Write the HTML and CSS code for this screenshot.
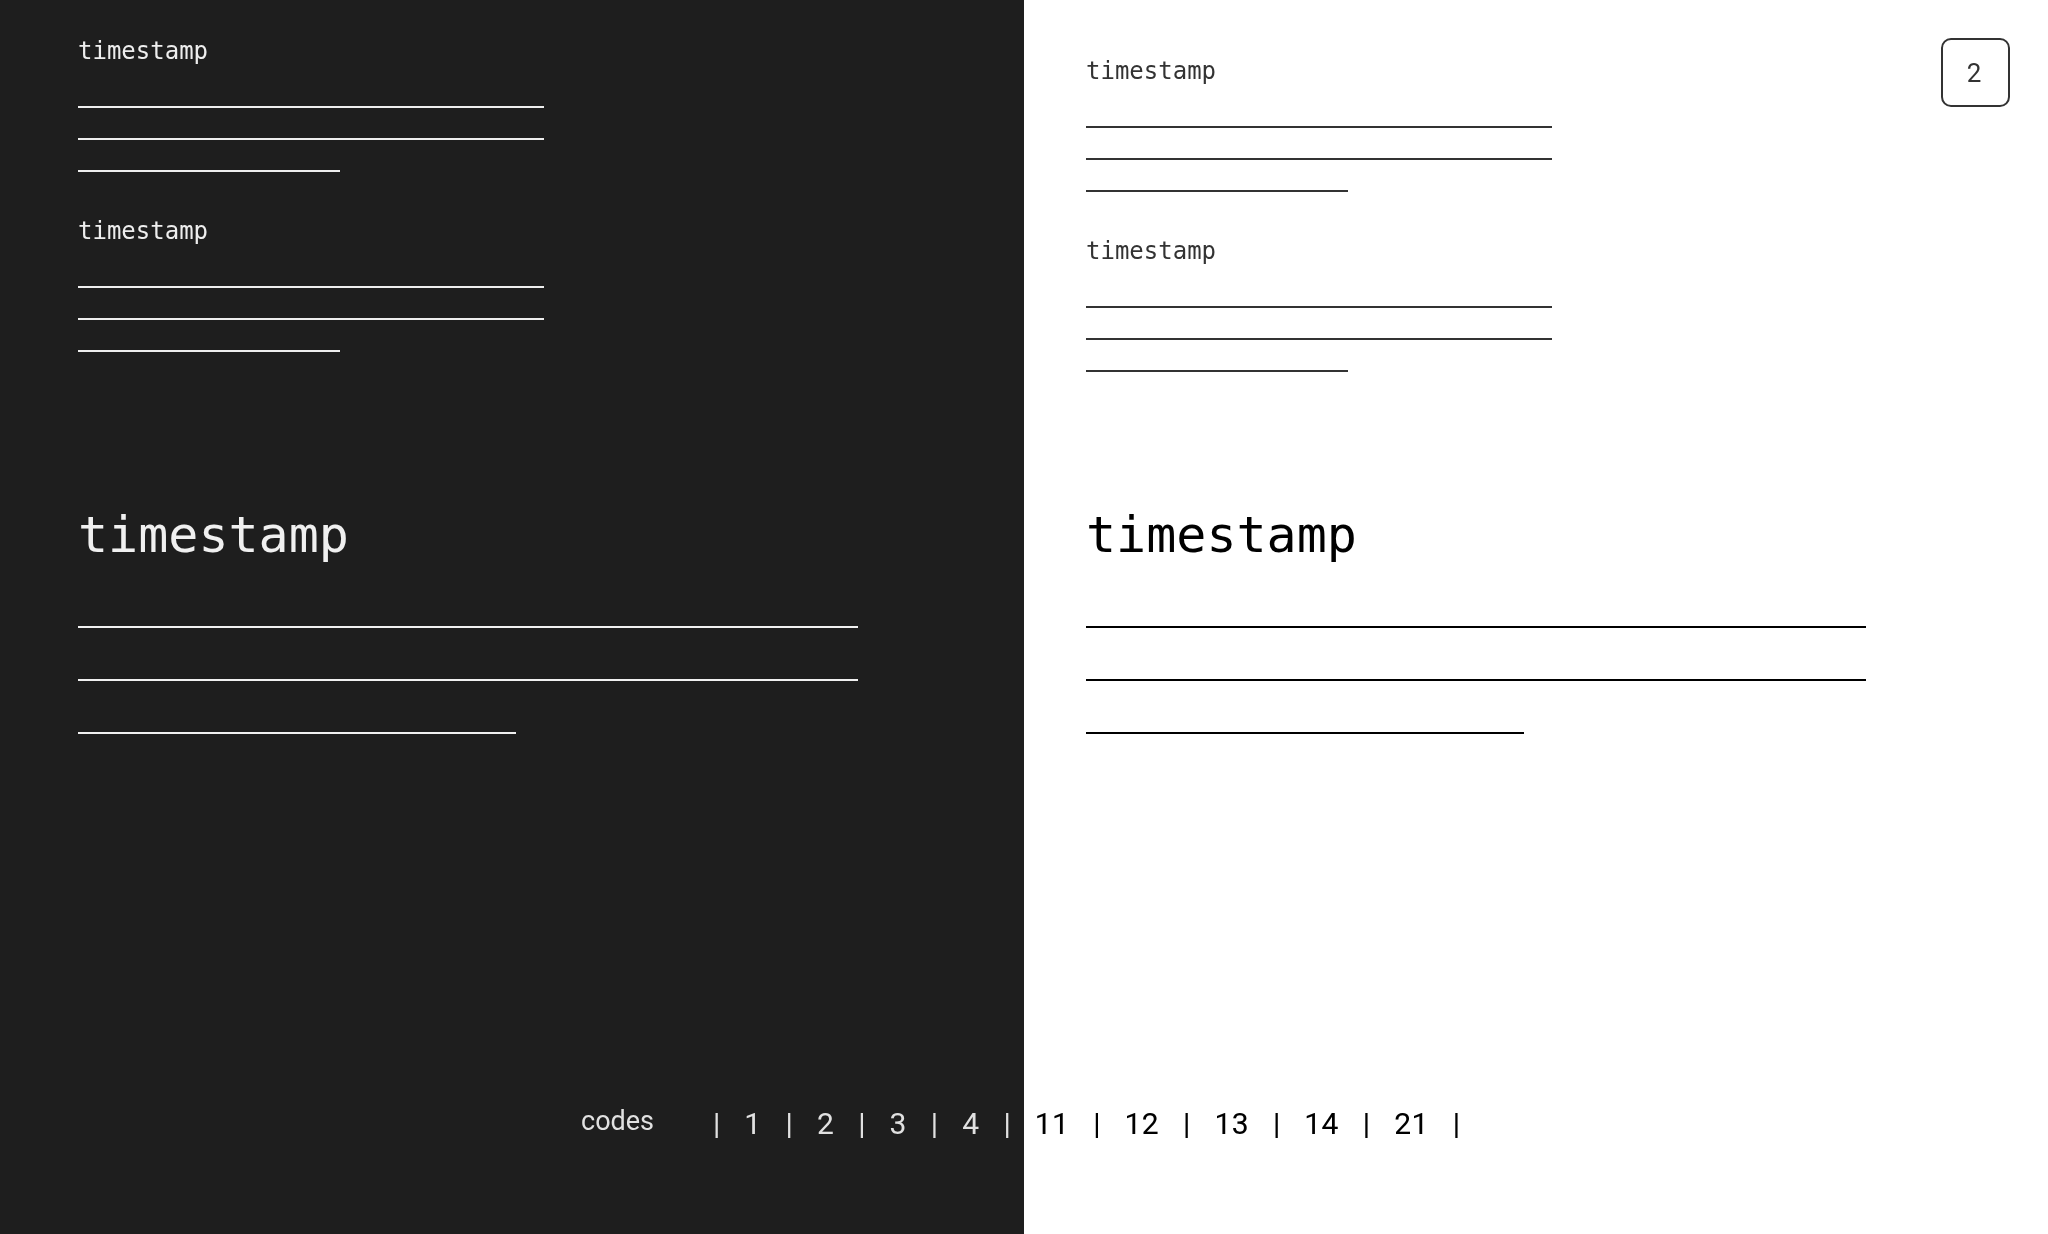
FILE: index.html
```html
<!DOCTYPE html>
<html lang="en">
<head>
<meta charset="utf-8">
<title>timestamps</title>
<link rel="stylesheet" href="styles.css">
</head>
<body>
<div class="page">
  <section class="panel panel-dark">
    <div class="notes">
      <div class="note">
        <div class="stamp">timestamp</div>
        <div class="rules"><span class="rule"></span><span class="rule"></span><span class="rule rule-short"></span></div>
      </div>
      <div class="note">
        <div class="stamp">timestamp</div>
        <div class="rules"><span class="rule"></span><span class="rule"></span><span class="rule rule-short"></span></div>
      </div>
    </div>
    <div class="feature">
      <div class="feature-stamp">timestamp</div>
      <div class="rules rules-lg"><span class="rule"></span><span class="rule"></span><span class="rule rule-short"></span></div>
    </div>
  </section>
  <section class="panel panel-light">
    <div class="notes">
      <div class="note">
        <div class="stamp">timestamp</div>
        <div class="rules"><span class="rule"></span><span class="rule"></span><span class="rule rule-short"></span></div>
      </div>
      <div class="note">
        <div class="stamp">timestamp</div>
        <div class="rules"><span class="rule"></span><span class="rule"></span><span class="rule rule-short"></span></div>
      </div>
    </div>
    <div class="feature">
      <div class="feature-stamp">timestamp</div>
      <div class="rules rules-lg"><span class="rule"></span><span class="rule"></span><span class="rule rule-short"></span></div>
    </div>
    <div class="badge">2</div>
  </section>
  <nav class="codes">
    <span class="codes-label">codes</span>
    <div class="codes-list">
      <span class="sep">|</span><span class="code">1</span>
      <span class="sep">|</span><span class="code">2</span>
      <span class="sep">|</span><span class="code">3</span>
      <span class="sep">|</span><span class="code">4</span>
      <span class="sep">|</span><span class="code">11</span>
      <span class="sep">|</span><span class="code">12</span>
      <span class="sep">|</span><span class="code">13</span>
      <span class="sep">|</span><span class="code">14</span>
      <span class="sep">|</span><span class="code">21</span>
      <span class="sep">|</span>
    </div>
  </nav>
</div>
</body>
</html>
```
FILE: styles.css
```css
html, body {
  margin: 0;
  padding: 0;
}

.page {
  position: relative;
  display: grid;
  grid-template-columns: 1024px 1024px;
  width: 2048px;
  height: 1234px;
  overflow: hidden;
}

.panel {
  box-sizing: border-box;
  height: 1234px;
}

.panel-dark {
  background: #1e1e1e;
  color: #eeeeee;
  padding: 39px 0 0 78px;
}

.panel-light {
  position: relative;
  background: #ffffff;
  color: #333333;
  padding: 59px 0 0 62px;
}

.notes {
  display: flex;
  flex-direction: column;
  gap: 47px;
}

.stamp {
  font-family: "DejaVu Sans Mono", "Liberation Mono", monospace;
  font-size: 24px;
  line-height: 24px;
}

.rules {
  display: flex;
  flex-direction: column;
  gap: 30px;
  margin-top: 43px;
}

.rule {
  display: block;
  width: 466px;
  height: 2px;
  background: currentColor;
}

.rule-short {
  width: 262px;
}

.feature {
  margin-top: 158px;
  color: #f0f0f0;
}

.panel-light .feature {
  margin-top: 138px;
  color: #000000;
}

.feature-stamp {
  font-family: "DejaVu Sans Mono", "Liberation Mono", monospace;
  font-size: 50px;
  line-height: 50px;
}

.rules-lg {
  margin-top: 66px;
  gap: 51px;
}

.rules-lg .rule {
  width: 780px;
}

.rules-lg .rule-short {
  width: 438px;
}

.badge {
  position: absolute;
  top: 38px;
  right: 38px;
  box-sizing: border-box;
  width: 69px;
  height: 69px;
  padding-right: 3px;
  border: 2px solid #333333;
  border-radius: 10px;
  display: flex;
  align-items: center;
  justify-content: center;
  font-family: Roboto, "Liberation Sans", sans-serif;
  font-size: 26px;
  color: #333333;
}

.codes {
  position: absolute;
  left: 581px;
  top: 1105px;
  display: flex;
  align-items: flex-start;
  color: #ffffff;
  mix-blend-mode: difference;
  font-family: Roboto, "Liberation Sans", sans-serif;
}

.codes-label {
  font-size: 27px;
  line-height: 27px;
  margin-top: 2.5px;
}

.codes-list {
  display: flex;
  gap: 24px;
  margin-left: 59px;
  margin-top: 3.5px;
  font-size: 30px;
  line-height: 30px;
  letter-spacing: 0.4px;
}

.codes-list .sep {
  letter-spacing: 0;
}
```
